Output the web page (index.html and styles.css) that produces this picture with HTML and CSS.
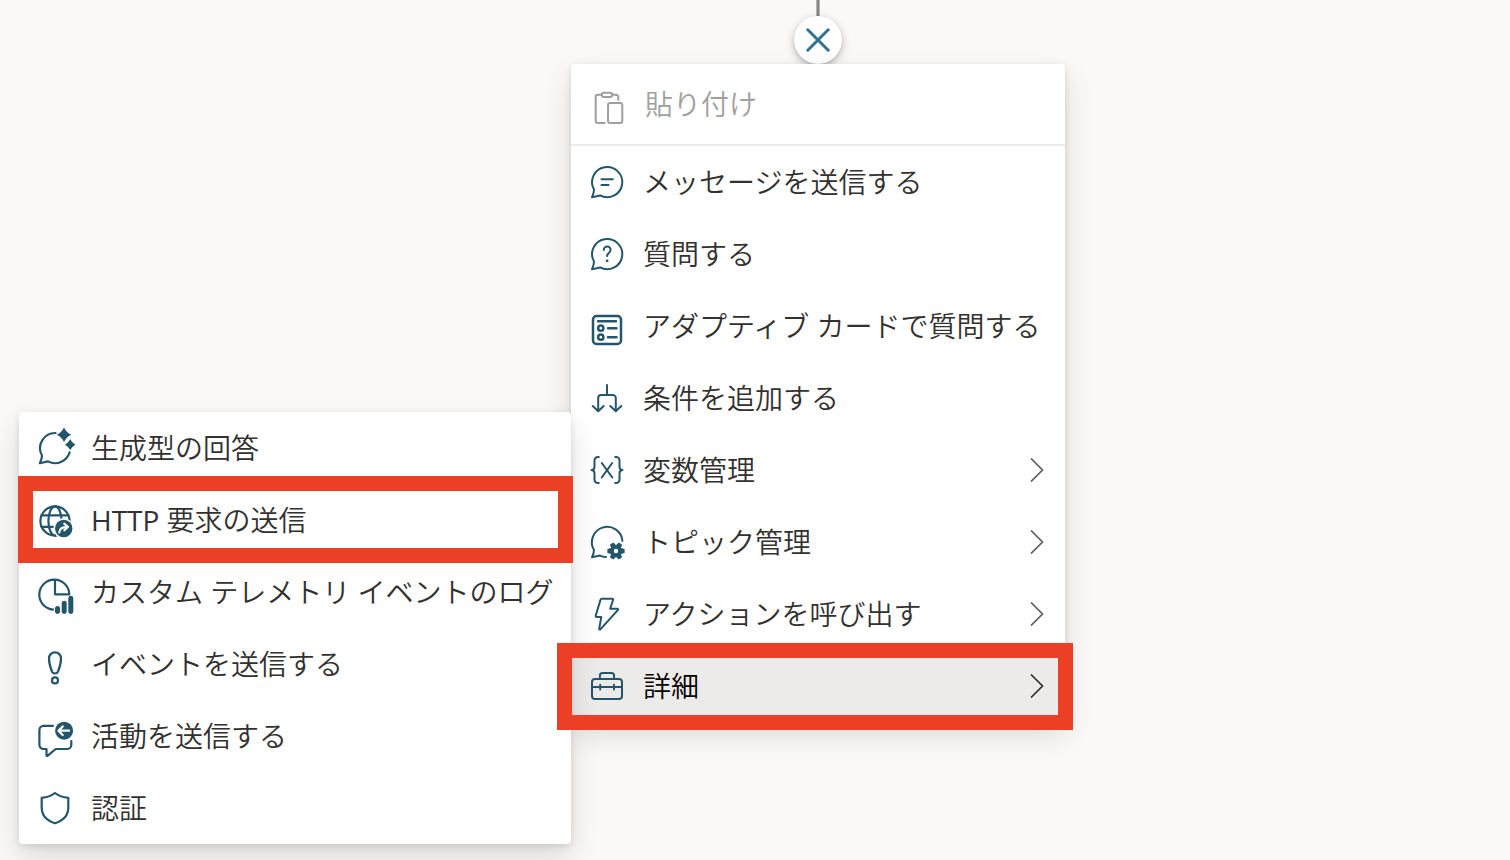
FILE: index.html
```html
<!DOCTYPE html>
<html lang="ja">
<head>
<meta charset="utf-8">
<meta name="viewport" content="width=device-width, initial-scale=1">
<title>ノードの追加</title>
<link rel="stylesheet" href="styles.css">
</head>
<body>
<main class="canvas">
  <div class="node">
    <div class="connector"></div>
    <button class="close" type="button" aria-label="閉じる">
      <svg class="close-icon" viewBox="0 0 24 24"><path d="M1.8 1.8 22.2 22.2M22.2 1.8 1.8 22.2"/></svg>
    </button>
    <ul class="menu" role="menu">
      <li class="entry entry-paste" role="none">
        <button class="item" type="button" role="menuitem" disabled>
          <svg class="icon" viewBox="0 0 40 40"><path d="M15.7 39H9a2.3 2.3 0 0 1-2.3-2.3V13A2.3 2.3 0 0 1 9 10.7h3.7M23.3 10.7H27a2.3 2.3 0 0 1 2.3 2.3v2.7"/><rect x="12.7" y="8.7" width="10.6" height="4.2" rx="2.1"/><rect x="19" y="19" width="14.3" height="20" rx="2.3"/></svg>
          <span class="label">貼り付け</span>
        </button>
      </li>
      <li class="entry" role="none">
        <button class="item" type="button" role="menuitem">
          <svg class="icon" viewBox="0 0 40 40"><path d="M7 27.5A15.1 15.1 0 1 1 13 33.4L5 35.2Q7 31 7 27.5Z"/><path d="M14.5 17.2h11.3M14.5 23h7"/></svg>
          <span class="label">メッセージを送信する</span>
        </button>
      </li>
      <li class="entry" role="none">
        <button class="item" type="button" role="menuitem">
          <svg class="icon" viewBox="0 0 40 40"><path d="M7 27.5A15.1 15.1 0 1 1 13 33.4L5 35.2Q7 31 7 27.5Z"/><path d="M16.8 16v-.2a3.4 3.4 0 0 1 6.8 0c0 3.2-3.5 3-3.5 6.2"/><circle class="solid" cx="20.1" cy="26.8" r="1.4"/></svg>
          <span class="label">質問する</span>
        </button>
      </li>
      <li class="entry" role="none">
        <button class="item" type="button" role="menuitem">
          <svg class="icon icon-bold" viewBox="0 0 40 40"><rect x="6" y="10" width="28" height="28" rx="3.5"/><path d="M11 15.2h18M21 22.2h8.5M21 31.2h8.5"/><circle cx="13.8" cy="22.2" r="2.6"/><circle cx="13.8" cy="31.2" r="2.6"/></svg>
          <span class="label">アダプティブ カードで質問する</span>
        </button>
      </li>
      <li class="entry" role="none">
        <button class="item" type="button" role="menuitem">
          <svg class="icon" viewBox="0 0 40 40"><path d="M20 7v10M11.2 33V20a3 3 0 0 1 3-3h11.6a3 3 0 0 1 3 3v13M5.7 28l5.5 5.3 5.5-5.3M23.3 28l5.5 5.3 5.5-5.3"/></svg>
          <span class="label">条件を追加する</span>
        </button>
      </li>
      <li class="entry" role="none">
        <button class="item" type="button" role="menuitem" aria-haspopup="menu">
          <svg class="icon" viewBox="0 0 40 40"><path d="M11.8 7h-1a3.3 3.3 0 0 0-3.3 3.3v6.2Q7.5 20 4.5 20 7.5 20 7.5 23.5v6.2a3.3 3.3 0 0 0 3.3 3.3h1M28.2 7h1a3.3 3.3 0 0 1 3.3 3.3v6.2q0 3.5 3 3.5-3 0-3 3.5v6.2a3.3 3.3 0 0 1-3.3 3.3h-1M14.8 13l10.5 14.5M25.2 13 14.8 27.5"/></svg>
          <span class="label">変数管理</span>
          <svg class="chevron" viewBox="0 0 16 24"><path d="M2 .5 13.5 12 2 23.5"/></svg>
        </button>
      </li>
      <li class="entry" role="none">
        <button class="item" type="button" role="menuitem" aria-haspopup="menu">
          <svg class="icon" viewBox="0 0 40 40"><path d="M35.4 18.8A15.3 15.3 0 1 0 7 28Q7 31 5 35.2L13 33.6Q15.5 34.8 19 35"/><path class="solid" fill-rule="evenodd" d="M37.6 27V31L34 31.9 35 35.4 31.6 37.4 29 34.8 26.4 37.4 23 35.4 24 31.9 20.4 31V27L24 26.1 23 22.6 26.4 20.6 29 23.2 31.6 20.6 35 22.6 34 26.1zM29 26.8a2.2 2.2 0 1 0 0 4.4 2.2 2.2 0 0 0 0-4.4z"/></svg>
          <span class="label">トピック管理</span>
          <svg class="chevron" viewBox="0 0 16 24"><path d="M2 .5 13.5 12 2 23.5"/></svg>
        </button>
      </li>
      <li class="entry" role="none">
        <button class="item" type="button" role="menuitem" aria-haspopup="menu">
          <svg class="icon" viewBox="0 0 40 40"><path d="M14.6 4.8h10.8q1 0 .7 1L23.2 14.8H30q1.8.2.8 1.4L13.6 35.2q-1.6 1-1.4-.6L14.3 23H9.7q-1.2 0-1-1.2L13.5 5.7q.3-.9 1.1-.9z"/></svg>
          <span class="label">アクションを呼び出す</span>
          <svg class="chevron" viewBox="0 0 16 24"><path d="M2 .5 13.5 12 2 23.5"/></svg>
        </button>
      </li>
      <li class="entry marked marked-parent" role="none">
        <button class="item item-open" type="button" role="menuitem" aria-haspopup="menu" aria-expanded="true">
          <svg class="icon" viewBox="0 0 40 40"><rect x="5" y="13" width="30" height="20" rx="3"/><path d="M12.9 13V9.7a2.7 2.7 0 0 1 2.7-2.7h8.8a2.7 2.7 0 0 1 2.7 2.7V13M5 21h30M13.2 18.8V23.5M27 18.8V23.5"/></svg>
          <span class="label">詳細</span>
          <svg class="chevron" viewBox="0 0 16 24"><path d="M2 .5 13.5 12 2 23.5"/></svg>
        </button>
        <ul class="menu submenu" role="menu">
          <li class="entry" role="none">
            <button class="item" type="button" role="menuitem">
              <svg class="icon" viewBox="0 0 40 40"><path d="M20.5 5A15.1 15.1 0 0 0 7 27.5Q7 31 4.8 35.2L13 33.4A15.1 15.1 0 0 0 34.6 24.2"/><path class="solid" d="M29-.5Q31.3 4.4 36.2 6.7 31.3 9 29 13.9 26.7 9 21.8 6.7 26.7 4.4 29-.5zM35.2 11.3q1.8 3.6 5.2 5.4-3.4 1.8-5.2 5.4-1.8-3.6-5.2-5.4 3.4-1.8 5.2-5.4z"/></svg>
              <span class="label">生成型の回答</span>
            </button>
          </li>
          <li class="entry marked marked-child" role="none">
            <button class="item" type="button" role="menuitem">
              <svg class="icon" viewBox="0 0 40 40"><circle cx="20" cy="21" r="14.6"/><ellipse cx="20" cy="21" rx="6.6" ry="14.6"/><path d="M6.5 15.3h27M6.5 26.8h27"/><circle class="gap" cx="28.7" cy="28.5" r="10.3"/><circle class="disc" cx="28.7" cy="28.5" r="8.7"/><path class="light" d="M24.3 32.5q.2-5.6 8-5.6M29.3 23.7l3.6 3.2-3.6 3.4"/></svg>
              <span class="label"><span class="latin">HTTP</span> 要求の送信</span>
            </button>
          </li>
          <li class="entry" role="none">
            <button class="item" type="button" role="menuitem">
              <svg class="icon" viewBox="0 0 40 40"><path d="M18 37.6A15 15 0 1 1 34.3 22.3H20V8"/><rect class="disc" x="20" y="34" width="5" height="8" rx="2.4"/><rect class="disc" x="26.7" y="28.8" width="5" height="13.2" rx="2.4"/><rect class="disc" x="33.3" y="23.8" width="5" height="18.2" rx="2.4"/></svg>
              <span class="label">カスタム テレメトリ イベントのログ</span>
            </button>
          </li>
          <li class="entry" role="none">
            <button class="item" type="button" role="menuitem">
              <svg class="icon" viewBox="0 0 40 40"><path d="M20 8.3a6 6 0 0 1 6 6.2c0 3.8-1.4 9.2-2.9 13q-1 2-3.1 2-2.1 0-3.1-2c-1.5-3.8-2.9-9.2-2.9-13a6 6 0 0 1 6-6.2z"/><circle cx="20" cy="36.4" r="3"/></svg>
              <span class="label">イベントを送信する</span>
            </button>
          </li>
          <li class="entry" role="none">
            <button class="item" type="button" role="menuitem">
              <svg class="icon" viewBox="0 0 40 40"><path d="M18 9.8H8.5A4.2 4.2 0 0 0 4.4 14v14.7A4.2 4.2 0 0 0 8.5 33h3v6.2q.2 1.2 1.3.4L20.7 33h11.3a4.3 4.3 0 0 0 4.3-4.3V25"/><circle class="disc" cx="29.1" cy="14.7" r="9"/><path class="light" d="M34 14.7H23.8M27.7 10.4l-4.2 4.3 4.2 4.3"/></svg>
              <span class="label">活動を送信する</span>
            </button>
          </li>
          <li class="entry" role="none">
            <button class="item" type="button" role="menuitem">
              <svg class="icon" viewBox="0 0 40 40"><path d="M20 5q5.5 4.3 13.3 4.8V19.5Q33.3 31 20 35.3 6.7 31 6.7 19.5V9.8Q14.5 9.3 20 5z"/></svg>
              <span class="label">認証</span>
            </button>
          </li>
        </ul>
      </li>
    </ul>
  </div>
</main>
</body>
</html>
```
FILE: styles.css
```css
* {
  box-sizing: border-box;
}

body {
  margin: 0;
  background: #faf9f8;
  color: #323130;
  font-family: "Open Sans", "Noto Sans CJK JP", sans-serif;
  font-size: 28px;
  font-weight: 350;
}

.canvas {
  min-height: 100vh;
  padding-left: 571px;
  overflow: hidden;
}

.node {
  display: flex;
  flex-direction: column;
  align-items: center;
  width: fit-content;
}

.connector {
  width: 4px;
  height: 16px;
  border: solid #b5b3b1;
  border-width: 0 1px;
  background: #8a8886;
}

.close {
  display: grid;
  place-items: center;
  width: 48px;
  height: 48px;
  padding: 0;
  border: 0;
  border-radius: 50%;
  background: #ffffff;
  box-shadow: 0 3px 8px rgba(0, 0, 0, 0.26), 0 1px 2px rgba(0, 0, 0, 0.12);
}

.close-icon {
  width: 24px;
  height: 24px;
  fill: none;
  stroke: #2f7391;
  stroke-width: 3;
  stroke-linecap: round;
}

.menu {
  position: relative;
  min-width: 494px;
  margin: 0;
  padding: 0;
  list-style: none;
  border-radius: 4px;
  background: #ffffff;
  box-shadow: 0 13px 29px rgba(0, 0, 0, 0.13), 0 2px 7px rgba(0, 0, 0, 0.11);
}

.submenu {
  position: absolute;
  right: 100%;
  bottom: -122px;
  min-width: 552px;
}

.entry {
  position: relative;
}

.entry-paste {
  border-bottom: 2px solid #edebe9;
}

.item {
  display: flex;
  align-items: center;
  gap: 16px;
  width: 100%;
  height: 72px;
  padding: 0 20px 0 16px;
  border: 0;
  background: transparent;
  color: inherit;
  font: inherit;
  line-height: 40px;
  text-align: left;
  white-space: nowrap;
}

.submenu .item {
  padding-right: 16px;
}

.item:disabled {
  height: 80px;
  padding-left: 18px;
  color: #a19f9d;
}

.item-open {
  background: #edebe9;
  color: #000000;
}

.icon {
  flex: none;
  width: 40px;
  height: 40px;
  overflow: visible;
  fill: none;
  stroke: #24566b;
  stroke-width: 2;
  stroke-linecap: round;
  stroke-linejoin: round;
}

.submenu .icon {
  stroke-width: 2.2;
}

.item:disabled .icon {
  stroke: #a19f9d;
}

.icon-bold {
  stroke-width: 2.5;
}

.icon .solid,
.icon .disc {
  fill: #24566b;
  stroke: none;
}

.icon .gap {
  fill: #ffffff;
  stroke: none;
}

.icon .light {
  stroke: #ffffff;
}

.label {
  flex: 1;
}

.latin {
  font-weight: 400;
}

.chevron {
  flex: none;
  width: 16px;
  height: 24px;
  fill: none;
  stroke: #605e5c;
  stroke-width: 1.7;
}

.item-open .chevron {
  stroke: #323130;
}

.marked::after {
  content: "";
  position: absolute;
  z-index: 1;
  border: 15px solid #ec4026;
  pointer-events: none;
}

.marked-parent::after {
  inset: -7px -8px -8px -14px;
}

.marked-child::after {
  inset: -8px -2px -7px -1px;
}
```
